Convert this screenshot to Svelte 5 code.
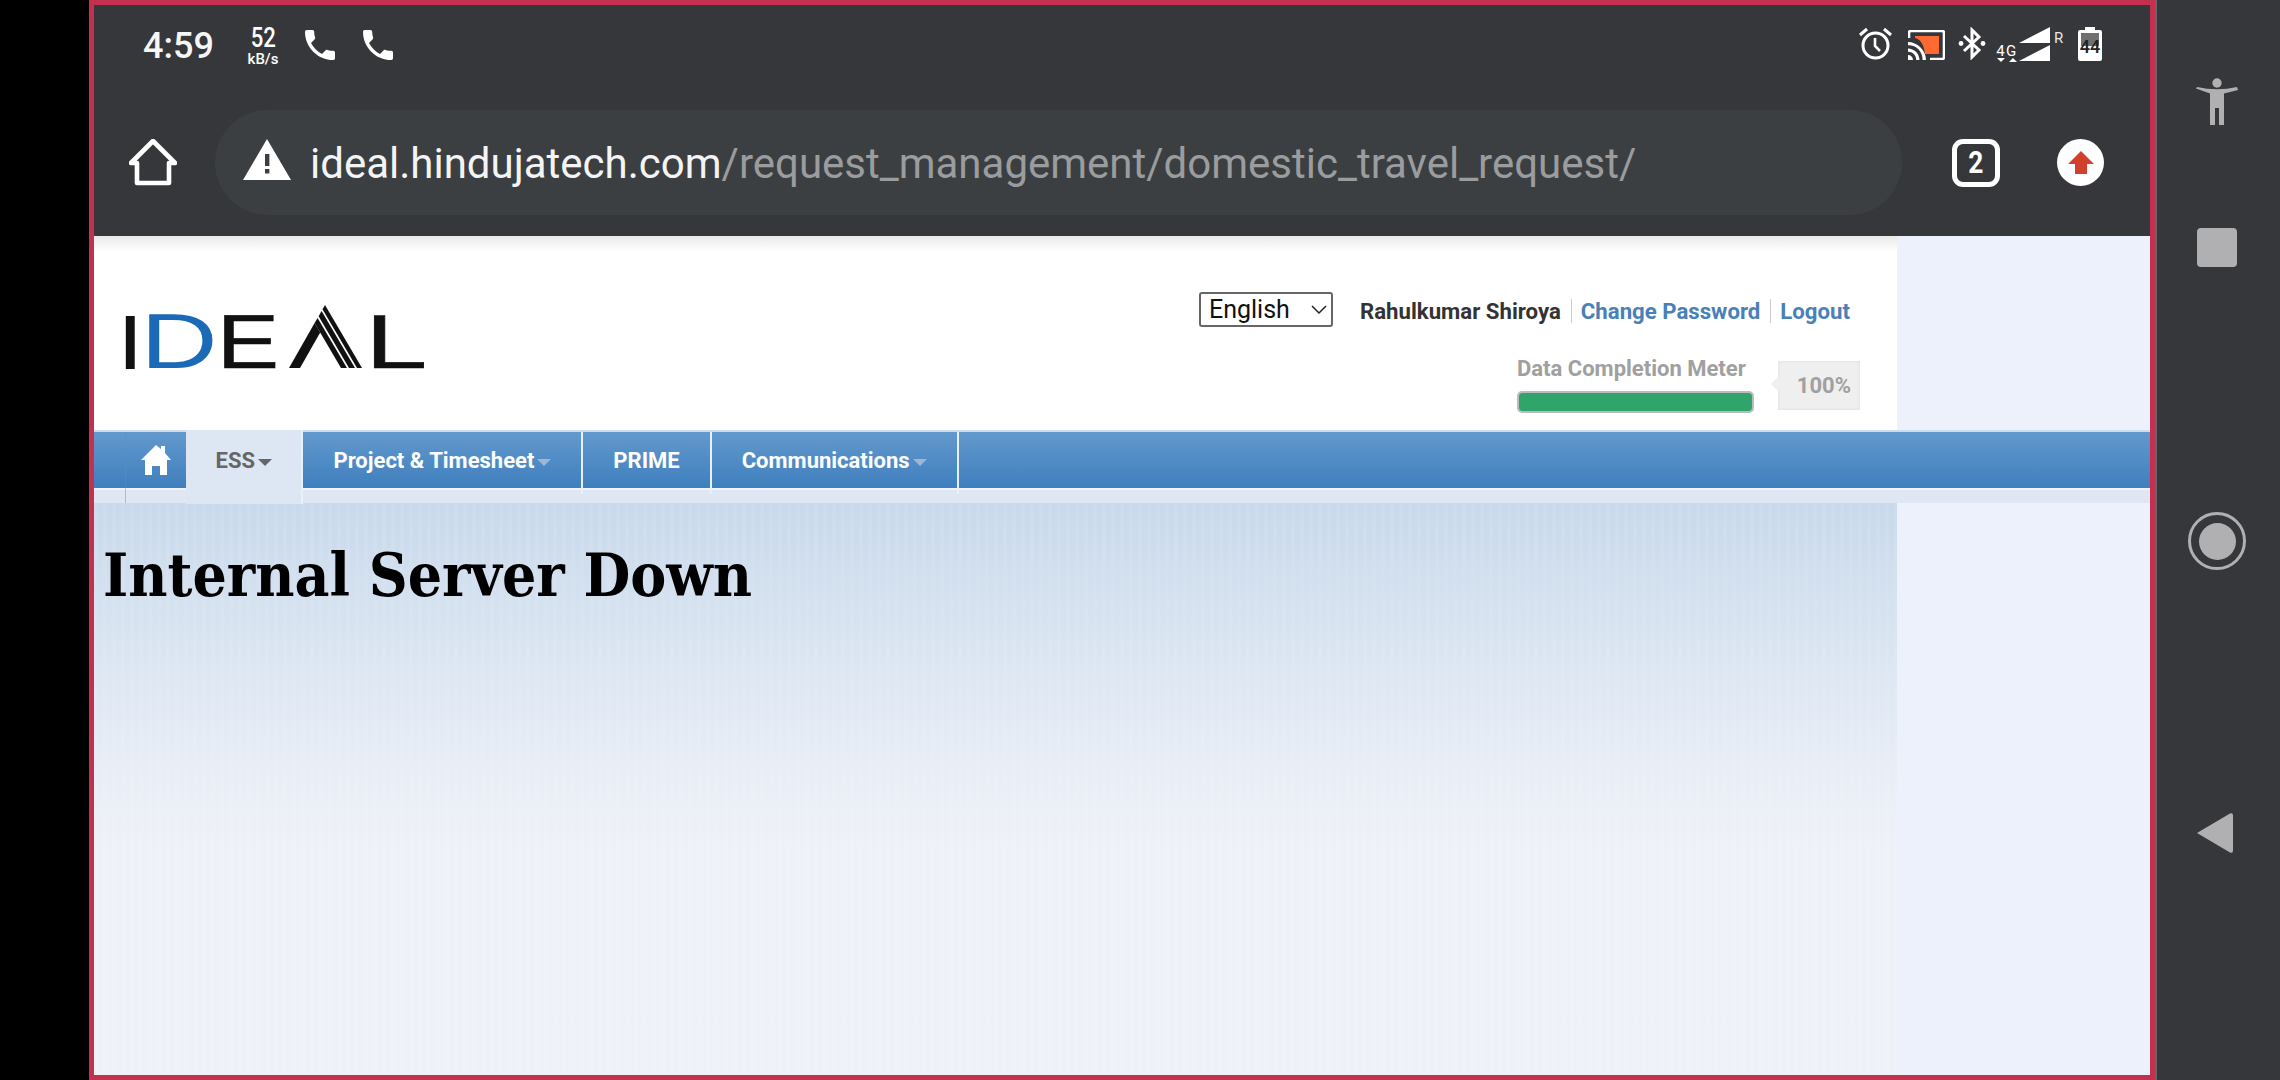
<script>
	const navItems = [
		{ label: 'ESS', caret: true, active: true },
		{ label: 'Project & Timesheet', caret: true },
		{ label: 'PRIME' },
		{ label: 'Communications', caret: true }
	];
	const phonePath =
		'M6.62 10.79c1.44 2.83 3.76 5.14 6.59 6.59l2.2-2.2c.27-.27.67-.36 1.02-.24 1.12.37 2.33.57 3.57.57.55 0 1 .45 1 1V20c0 .55-.45 1-1 1-9.39 0-17-7.61-17-17 0-.55.45-1 1-1h3.5c.55 0 1 .45 1 1 0 1.25.2 2.45.57 3.57.11.35.03.74-.25 1.02l-2.2 2.2z';
</script>

<div class="device">
	<div class="gutter"></div>

	<div class="screen">
		<div class="chrome">
			<div class="status">
				<span class="time">4:59</span>
				<span class="speed"><b>52</b><small>kB/s</small></span>
				<svg class="phone first" viewBox="3 3 18 18"><path d={phonePath} /></svg>
				<svg class="phone" viewBox="3 3 18 18"><path d={phonePath} /></svg>

				<div class="status-right">
					<svg class="alarm" width="33" height="33" viewBox="0 0 33 33">
						<circle cx="16.5" cy="18.5" r="12.5" fill="none" stroke="#fff" stroke-width="3" />
						<path d="M16 11v8l5 5" fill="none" stroke="#fff" stroke-width="2.6" />
						<path d="M1 8l7-6M32 8l-7-6" fill="none" stroke="#fff" stroke-width="3" />
					</svg>
					<svg class="cast" width="37" height="30" viewBox="0 0 37 30">
						<path d="M1 8V3a2 2 0 0 1 2-2h31a2 2 0 0 1 2 2v24a2 2 0 0 1-2 2H22" fill="none" stroke="#fff" stroke-width="2.6" />
						<path d="M7 6h24v18H17C16 14 12 9 7 8z" fill="#ff6a33" />
						<path d="M0 12c9 0 18 8 18 18h-3.4C14.600 21 8 15 0 15.300z" fill="#fff" />
						<path d="M0 18.500c6 0 11.500 5 11.500 11.500H8.200C8.200 25 4.500 21.800 0 21.800z" fill="#fff" />
						<path d="M0 25a5 5 0 0 1 5 5H0z" fill="#fff" />
					</svg>
					<svg class="bt" width="28" height="33" viewBox="0 0 28 33">
						<path d="M6 9l15 14-7 7V3l7 7L6 24" fill="none" stroke="#fff" stroke-width="3" />
						<circle cx="3" cy="16.500" r="2.400" fill="#fff" />
						<circle cx="25" cy="16.500" r="2.400" fill="#fff" />
					</svg>
					<div class="net">
						<span>4G</span>
						<svg width="20" height="5" viewBox="0 0 20 5"><path d="M0 0h8L4 4zM12 4l4-4 4 4z" fill="#fff" /></svg>
					</div>
					<svg class="signal" width="32" height="34" viewBox="0 0 32 34">
						<path d="M0 16L31 0v16zM0 34l31-16v16z" fill="#fff" />
					</svg>
					<span class="roam">R</span>
					<div class="battery">
						<i></i>
						<span>44</span>
					</div>
				</div>
			</div>

			<div class="toolbar">
				<svg class="home" width="48" height="48" viewBox="0 0 48 48">
					<path d="M2 24L24 2l22 22h-6v20H8V24z" fill="none" stroke="#fff" stroke-width="4.600" stroke-linejoin="round" />
				</svg>
				<div class="omnibox">
					<svg class="warn" width="48" height="41" viewBox="0 0 48 41">
						<path d="M24 0l24 41H0z" fill="#fff" />
						<path d="M22 15h4.400v12H22zM22 30h4.400v4.400H22z" fill="#3c3f42" />
					</svg>
					<span class="url"><em>ideal.hindujatech.com</em>/request_management/domestic_travel_request/</span>
				</div>
				<div class="tabs"><span>2</span></div>
				<div class="upload">
					<svg width="26" height="23" viewBox="0 0 26 23"><path d="M13 0l13 13h-7v10H7V13H0z" fill="#d23f2b" /></svg>
				</div>
			</div>
		</div>

		<div class="page">
			<header class="masthead">
				<svg class="logo" width="300" height="70" viewBox="0 -8 300 70">
					<text class="ink" x="-4" y="57">I</text>
					<text class="blue" x="16.600" y="57" textLength="77" lengthAdjust="spacingAndGlyphs">D</text>
					<text class="ink thin" x="93" y="57" textLength="62" lengthAdjust="spacingAndGlyphs">E</text>
					<path d="M165 57L190.600 12.100 196.200 21.600 176 57z" fill="#111" />
					<path d="M238 57H233L198.500 -1.700 201 -6z" fill="#111" />
					<path d="M231 57H225L194.600 5.200 197.600 0z" fill="#111" />
					<path d="M223 57H217L190.600 12.100 193.600 7z" fill="#111" />
					<text class="ink thin" x="241.200" y="57" textLength="62" lengthAdjust="spacingAndGlyphs">L</text>
				</svg>

				<div class="account">
					<div class="user-row">
						<div class="lang">
							<select>
								<option>English</option>
							</select>
							<svg width="16" height="10" viewBox="0 0 16 10"><path d="M1 1l7 7 7-7" fill="none" stroke="#222" stroke-width="1.500" /></svg>
						</div>
						<span class="user">Rahulkumar Shiroya</span>
						<a href="#pw" class="link divided">Change Password</a>
						<a href="#out" class="link divided">Logout</a>
					</div>
					<div class="meter">
						<div class="meter-left">
							<span class="meter-label">Data Completion Meter</span>
							<div class="bar"><div class="fill" style="width: 100%"></div></div>
						</div>
						<div class="pct">100%</div>
					</div>
				</div>
			</header>

			<nav class="nav">
				<a href="#home" class="home-link" aria-label="Home">
					<svg width="30" height="32" viewBox="0 0 30 32">
						<path d="M15 1l5 4V2h4v7l6 7h-4v15h-7v-9H11v9H4V16H0z" fill="#fff" />
					</svg>
				</a>
				{#each navItems as item}
					<a href="#item" class="nav-item" class:active={item.active}>
						{item.label}{#if item.caret}<i class="caret"></i>{/if}
					</a>
				{/each}
			</nav>
			<div class="subnav"></div>

			<main class="content">
				<h1>Internal Server Down</h1>
			</main>
		</div>
	</div>

	<aside class="rail">
		<svg class="a11y" width="42" height="48" viewBox="0 0 42 48">
			<circle cx="21" cy="5" r="4.700" />
			<path d="M0 10.500L1 9Q21 13.500 41 9L42 12 28 15.500V47H23V30H19V47H14V15.500z" />
		</svg>
		<div class="square"></div>
		<div class="ring"><div></div></div>
		<svg class="back" width="38" height="42" viewBox="0 0 38 42">
			<path d="M1 21L34 1.500q3-1 3 2v35q0 3-3 2z" />
		</svg>
	</aside>
</div>

<style>
	:global(body) {
		background: #000;
	}

	.device {
		display: flex;
		width: 2280px;
		height: 1080px;
		font-family: Roboto, sans-serif;
		overflow: hidden;
	}

	.gutter {
		width: 89px;
		background: #000;
	}

	.screen {
		width: 2066px;
		height: 1080px;
		box-sizing: border-box;
		border: 5px solid #c4304f;
		display: flex;
		flex-direction: column;
		background: #edf1fb;
	}

	.chrome {
		height: 231px;
		background: #36373b;
		flex: none;
	}

	.status {
		display: flex;
		align-items: flex-start;
		height: 105px;
		padding-left: 49px;
		box-sizing: border-box;
		color: #fff;
		position: relative;
	}

	.time {
		font-size: 36px;
		font-weight: 500;
		line-height: 41px;
		margin-top: 21px;
		width: 103px;
		color: #f6f6f6;
	}

	.speed {
		display: flex;
		flex-direction: column;
		align-items: center;
		width: 34px;
		margin-top: 20px;
	}

	.speed b {
		font-size: 27px;
		line-height: 27px;
		font-weight: 500;
		transform: scaleX(0.82);
	}

	.speed small {
		font-size: 15px;
		line-height: 14px;
		font-weight: 500;
		white-space: nowrap;
	}

	.phone {
		width: 30px;
		height: 30px;
		margin-top: 25px;
		margin-left: 28px;
		fill: #fff;
	}

	.phone.first {
		margin-left: 25px;
	}

	.status-right {
		margin-left: auto;
		margin-right: 48px;
		display: flex;
		align-items: flex-start;
		padding-top: 22px;
	}

	.cast {
		margin-left: 16px;
		margin-top: 3px;
	}

	.bt {
		margin-left: 13px;
	}

	.net {
		margin-left: 9px;
		margin-top: 17px;
		width: 24px;
		display: flex;
		flex-direction: column;
		align-items: center;
	}

	.net span {
		font-size: 15px;
		line-height: 14px;
		letter-spacing: 1.500px;
	}

	.roam {
		font-size: 15px;
		line-height: 15px;
		margin-left: 3px;
		margin-top: 4px;
		width: 24px;
		color: #e8e8e8;
	}

	.battery {
		width: 24px;
		height: 31px;
		margin-top: 3px;
		background: #fff;
		border-radius: 2px;
		position: relative;
		display: flex;
		justify-content: center;
	}

	.battery::before {
		content: '';
		position: absolute;
		left: 7px;
		right: 7px;
		top: -3px;
		height: 3px;
		background: #fff;
	}

	.battery i {
		position: absolute;
		left: 3px;
		right: 3px;
		top: 3px;
		height: 13px;
		background: #707070;
	}

	.battery span {
		position: relative;
		font-size: 18px;
		font-weight: 500;
		line-height: 18px;
		margin-top: 8px;
		color: #222;
	}

	.toolbar {
		display: flex;
		align-items: center;
		height: 105px;
		padding-left: 35px;
	}

	.home {
		flex: none;
	}

	.omnibox {
		width: 1687px;
		height: 105px;
		margin-left: 38px;
		box-sizing: border-box;
		border-radius: 53px;
		background: #3c3f42;
		display: flex;
		align-items: center;
		padding-left: 28px;
		gap: 19px;
		flex: none;
	}

	.warn {
		margin-bottom: 6px;
	}

	.url {
		font-size: 42px;
		line-height: 48px;
		padding-top: 2px;
		color: #9a9c9e;
		white-space: nowrap;
	}

	.url em {
		font-style: normal;
		color: #f4f4f4;
	}

	.tabs {
		width: 48px;
		height: 48px;
		box-sizing: border-box;
		border: 5px solid #fff;
		border-radius: 11px;
		margin-left: 50px;
		color: #fff;
		font-size: 31px;
		font-weight: 700;
		display: flex;
		align-items: center;
		justify-content: center;
		flex: none;
	}

	.tabs span {
		display: block;
		transform: scaleX(0.85);
	}

	.upload {
		width: 47px;
		height: 47px;
		border-radius: 50%;
		background: #fff;
		margin-left: 57px;
		display: flex;
		align-items: center;
		justify-content: center;
		flex: none;
	}

	.page {
		flex: 1;
		display: flex;
		flex-direction: column;
		min-height: 0;
	}

	.masthead {
		width: 1803px;
		height: 194px;
		flex: none;
		box-sizing: border-box;
		background: linear-gradient(#e9e9e9, #fff 16px);
		display: flex;
		justify-content: space-between;
		padding: 56px 37px 0 30px;
	}

	.logo {
		margin-top: 11px;
		overflow: visible;
	}

	.logo text {
		font-family: 'Liberation Sans', sans-serif;
		font-size: 74px;
		stroke-width: 2px;
	}

	.logo text.thin {
		font-size: 76px;
		stroke-width: 0.6px;
	}

	.ink {
		fill: #111;
		stroke: #111;
	}

	.logo text.blue {
		fill: #1b6ab8;
		font-size: 77px;
		stroke-width: 0;
	}

	.account {
		display: flex;
		flex-direction: column;
		align-items: flex-end;
		width: 680px;
	}

	.user-row {
		display: flex;
		align-items: center;
		height: 35px;
		font-size: 22.200px;
		font-weight: 700;
		white-space: nowrap;
		margin-right: 10px;
	}

	.lang {
		position: relative;
		margin-right: 27px;
	}

	.lang select {
		appearance: none;
		display: block;
		width: 134px;
		height: 35px;
		box-sizing: border-box;
		border: 2px solid #666;
		border-radius: 3px;
		background: #fff;
		padding: 0 0 0 8px;
		font-family: Roboto, sans-serif;
		font-size: 25px;
		color: #111;
	}

	.lang svg {
		position: absolute;
		right: 6px;
		top: 13px;
	}

	.user {
		color: #333;
		padding-top: 3px;
	}

	.link {
		color: #4a80b8;
		text-decoration: none;
		margin-top: 3px;
	}

	.divided {
		border-left: 1px solid #ccc;
		margin-left: 10px;
		padding-left: 9px;
		line-height: 24px;
	}

	.meter {
		display: flex;
		margin-top: 29px;
		width: 343px;
	}

	.meter-left {
		display: flex;
		flex-direction: column;
		width: 237px;
	}

	.meter-label {
		color: #a0a0a0;
		font-size: 22px;
		font-weight: 700;
		line-height: 26px;
		white-space: nowrap;
	}

	.bar {
		height: 22px;
		margin-top: 9px;
		box-sizing: border-box;
		border: 2px solid #bbb;
		border-radius: 5px;
		overflow: hidden;
	}

	.fill {
		height: 100%;
		background: #2fa56b;
	}

	.pct {
		width: 82px;
		height: 49px;
		margin-left: 24px;
		margin-top: 5px;
		box-sizing: border-box;
		background: #efefef;
		box-shadow: inset 0 0 3px #dcdcdc;
		color: #a0a0a0;
		font-size: 22px;
		font-weight: 700;
		display: flex;
		align-items: center;
		justify-content: flex-end;
		padding-right: 9px;
		position: relative;
	}

	.pct::before {
		content: '';
		position: absolute;
		left: -5px;
		top: 18px;
		width: 10px;
		height: 10px;
		background: #efefef;
		transform: rotate(45deg);
	}

	.nav {
		display: flex;
		height: 60px;
		flex: none;
		box-sizing: border-box;
		border-top: 2px solid #cfdcea;
		border-bottom: 2px solid #eef3fa;
		background: linear-gradient(#6399cd, #3f7fbe);
		position: relative;
	}

	.nav::before {
		content: '';
		position: absolute;
		left: 31px;
		top: 0;
		width: 1px;
		height: 71px;
		background: rgba(100, 140, 190, 0.45);
	}

	.home-link {
		width: 92px;
		display: flex;
		align-items: center;
		justify-content: flex-end;
		padding-right: 15px;
		box-sizing: border-box;
		height: 56px;
	}

	.nav-item {
		display: flex;
		align-items: center;
		justify-content: center;
		padding: 0 30px 6px;
		height: 62px;
		color: #fff;
		font-size: 22px;
		font-weight: 700;
		text-decoration: none;
		border-right: 2px solid #e8f0f8;
		box-sizing: border-box;
		white-space: nowrap;
	}

	.nav-item.active {
		color: #666;
		background: #dde6f3;
		margin-top: -2px;
		height: 74px;
		padding: 0 29.500px 14px;
		position: relative;
		z-index: 1;
	}

	.caret {
		width: 0;
		height: 0;
		margin-left: 3px;
		margin-top: 4px;
		border: 7px solid transparent;
		border-top-color: #9db8d4;
		border-bottom: 0;
	}

	.active .caret {
		border-top-color: #666;
	}

	.subnav {
		height: 13px;
		flex: none;
		background: #dee7f3;
	}

	.content {
		flex: 1;
		width: 1803px;
		box-sizing: border-box;
		padding: 32px 0 0 9px;
		background:
			repeating-linear-gradient(90deg, rgba(255, 255, 255, 0.07) 0 4px, rgba(255, 255, 255, 0) 4px 9px),
			linear-gradient(#c8d9eb 0, #d6e2f0 110px, #e8edf6 260px, #eef1f7 340px);
	}

	h1 {
		margin: 0;
		font-family: 'DejaVu Serif', serif;
		font-stretch: condensed;
		font-size: 60px;
		font-weight: 700;
		line-height: 80px;
		color: #000;
		white-space: nowrap;
	}

	.rail {
		width: 125px;
		box-sizing: border-box;
		background: #36373b;
		border-left: 2px solid #66676b;
		display: flex;
		flex-direction: column;
		align-items: center;
		padding-top: 78px;
		padding-right: 3px;
		fill: #b0b0b2;
		flex: none;
	}

	.square {
		width: 40px;
		height: 39px;
		margin-top: 102px;
		border-radius: 4px;
		background: #b0b0b2;
	}

	.ring {
		width: 58px;
		height: 58px;
		margin-top: 245px;
		box-sizing: border-box;
		border: 3px solid #b0b0b2;
		border-radius: 50%;
		display: flex;
		align-items: center;
		justify-content: center;
	}

	.ring div {
		width: 37px;
		height: 37px;
		border-radius: 50%;
		background: #b0b0b2;
	}

	.back {
		margin-top: 242px;
		margin-right: 5px;
	}
</style>
